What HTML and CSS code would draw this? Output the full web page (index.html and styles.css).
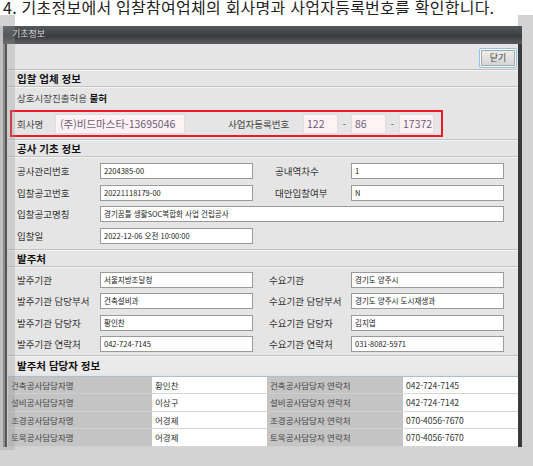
FILE: index.html
```html
<!DOCTYPE html>
<html lang="ko">
<head>
<meta charset="utf-8">
<link rel="stylesheet" href="styles.css">
</head>
<body>
<div class="caption">4. 기초정보에서 입찰참여업체의 회사명과 사업자등록번호를 확인합니다.</div>
<div class="topstrip"><div class="paper"></div></div>
<div class="window">
  <div class="titlebar">기초정보</div>
  <div class="frame">
    <div class="content">
      <div class="toolbar"><div class="btn">닫기</div></div>
      <div class="sep"></div>
      <div class="shead">입찰 업체 정보</div>
      <div class="sep"></div>
      <div class="permit">상호시장진출허용 <b>불허</b></div>
      <div class="redbox">
        <span class="rlabel">회사명</span>
        <span class="rinp wname">(주)비드마스타-13695046</span>
        <span class="rlabel2">사업자등록번호</span>
        <span class="rinp wnum">122</span>
        <span class="dash">-</span>
        <span class="rinp wnum">86</span>
        <span class="dash">-</span>
        <span class="rinp wnum">17372</span>
      </div>
      <div class="sep"></div>
      <div class="shead">공사 기초 정보</div>
      <div class="sep"></div>
      <div class="fields basic">
        <div class="frow">
          <span class="lbl">공사관리번호</span><span class="inp">2204385-00</span>
          <span class="lbl2">공내역차수</span><span class="inp">1</span>
        </div>
        <div class="frow">
          <span class="lbl">입찰공고번호</span><span class="inp">20221118179-00</span>
          <span class="lbl2">대안입찰여부</span><span class="inp">N</span>
        </div>
        <div class="frow">
          <span class="lbl">입찰공고명칭</span><span class="inp wide">경기꿈틀 생활SOC복합화 사업 건립공사</span>
        </div>
        <div class="frow">
          <span class="lbl">입찰일</span><span class="inp">2022-12-06 오전 10:00:00</span>
        </div>
      </div>
      <div class="sep"></div>
      <div class="shead">발주처</div>
      <div class="sep"></div>
      <div class="fields order">
        <div class="frow">
          <span class="lbl">발주기관</span><span class="inp">서울지방조달청</span>
          <span class="lbl3">수요기관</span><span class="inp">경기도 양주시</span>
        </div>
        <div class="frow">
          <span class="lbl">발주기관 담당부서</span><span class="inp">건축설비과</span>
          <span class="lbl3">수요기관 담당부서</span><span class="inp">경기도 양주시 도시재생과</span>
        </div>
        <div class="frow">
          <span class="lbl">발주기관 담당자</span><span class="inp">황인찬</span>
          <span class="lbl3">수요기관 담당자</span><span class="inp">김지엽</span>
        </div>
        <div class="frow">
          <span class="lbl">발주기관 연락처</span><span class="inp">042-724-7145</span>
          <span class="lbl3">수요기관 연락처</span><span class="inp">031-8082-5971</span>
        </div>
      </div>
      <div class="sep"></div>
      <div class="shead last">발주처 담당자 정보</div>
      <div class="table">
        <div class="trow"><span class="tl c1">건축공사담당자명</span><span class="tv c2">황인찬</span><span class="tl c3">건축공사담당자 연락처</span><span class="tv c4">042-724-7145</span></div>
        <div class="trow"><span class="tl c1">설비공사담당자명</span><span class="tv c2">이상구</span><span class="tl c3">설비공사담당자 연락처</span><span class="tv c4">042-724-7142</span></div>
        <div class="trow"><span class="tl c1">조경공사담당자명</span><span class="tv c2">어경제</span><span class="tl c3">조경공사담당자 연락처</span><span class="tv c4">070-4056-7670</span></div>
        <div class="trow"><span class="tl c1">토목공사담당자명</span><span class="tv c2">어경제</span><span class="tl c3">토목공사담당자 연락처</span><span class="tv c4">070-4056-7670</span></div>
      </div>
    </div>
  </div>
</div>
<div class="dim"></div>
</body>
</html>
```
FILE: styles.css
```css
* { box-sizing: border-box; }
html, body { margin: 0; padding: 0; }
body {
  width: 533px;
  height: 466px;
  overflow: hidden;
  background: #d3d3d3;
  font-family: "Noto Sans CJK KR", "Noto Sans", sans-serif;
  color: #333;
  position: relative;
}
.caption {
  height: 15px;
  background: #fff;
  font-size: 16px;
  line-height: 15px;
  padding-left: 3px;
  color: #222;
  white-space: nowrap;
  letter-spacing: 0.25px;
}
.topstrip {
  height: 11px;
  display: flex;
}
.paper {
  margin-left: 15px;
  width: 503px;
  background: #fff;
}
.window {
  margin-left: 3px;
  width: 519px;
  background: #8a8a8a;
}
.titlebar {
  height: 18px;
  background: linear-gradient(#55585d 0%, #3a3c40 55%, #5a5c5f 100%);
  color: #d6d6d6;
  font-size: 9px;
  line-height: 15px;
  padding-left: 9px;
}
.frame {
  margin-left: 2px;
  border-left: 2px solid #3a3a3a;
  border-right: 4px solid #3a3a3a;
  background: #e5e5e5;
}
.content {
  display: flex;
  flex-direction: column;
  font-size: 9.5px;
}
.toolbar {
  height: 25px;
  display: flex;
  justify-content: flex-end;
  align-items: flex-start;
  padding-top: 4px;
  padding-right: 1px;
}
.btn {
  width: 38px;
  height: 20px;
  border: 1px solid #8cc4ec;
  border-radius: 2px;
  background: linear-gradient(#efefef, #d2d2d2);
  box-shadow: inset 0 0 0 1px #fafafa, inset 0 0 0 2px #a8a8a8;
  font-size: 9px;
  line-height: 18px;
  text-align: center;
  color: #444;
}
.sep {
  height: 2px;
  background: #c2c2c2;
  border-bottom: 1px solid #f4f4f4;
}
.shead {
  height: 15px;
  font-size: 10.5px;
  font-weight: bold;
  line-height: 15px;
  padding-left: 10px;
  color: #111;
}
.shead.last {
  height: 17px;
  line-height: 17px;
  background: #e9e9e9;
}
.permit {
  height: 21px;
  line-height: 21px;
  padding-left: 10px;
  color: #444;
}
.permit b { color: #111; }
.redbox {
  margin: 1px 0 2px 3px;
  width: 433px;
  height: 27px;
  border: 2px solid #ea1b24;
  display: flex;
  align-items: center;
  color: #444;
}
.rlabel { margin-left: 5px; width: 38px; }
.rlabel2 { margin-left: 43px; width: 75px; }
.rinp {
  height: 20px;
  background: #fff2f5;
  border: 1px solid #e4dcdc;
  font-size: 10.5px;
  line-height: 18px;
  color: #6d607c;
  padding-left: 3px;
}
.wname { width: 130px; padding-left: 4px; }
.wnum { width: 35px; }
.dash { width: 13px; text-align: center; color: #555; }
.fields {
  display: flex;
  flex-direction: column;
}
.basic { padding: 5px 0 5px 0; gap: 5.7px; }
.order { padding: 4px 0 3px 0; gap: 5.3px; }
.frow {
  display: flex;
  align-items: center;
  height: 16px;
}
.lbl { width: 93px; padding-left: 10px; white-space: nowrap; }
.lbl2 { margin-left: 22px; width: 76px; white-space: nowrap; }
.lbl3 { margin-left: 16px; width: 82px; white-space: nowrap; }
.inp {
  width: 153px;
  height: 16px;
  background: #fff;
  border: 1px solid #9a9a9a;
  font-size: 7.5px;
  line-height: 14px;
  padding-left: 3px;
  color: #222;
  white-space: nowrap;
  overflow: hidden;
}
.inp.wide { width: 404px; }
.table {
  margin-left: 1px;
  border-top: 1px solid #a9bfd6;
  margin-top: 2px;
  font-size: 8.5px;
}
.trow {
  display: flex;
  height: 17.5px;
}
.tl, .tv {
  line-height: 16.5px;
  border-bottom: 1px solid #d6d6d6;
  white-space: nowrap;
}
.tl { background: #c4c4c4; color: #444; border-bottom-color: #cfcfcf; }
.tv { background: #fff; color: #333; padding-left: 3px; }
.c1 { width: 144px; padding-left: 3px; }
.c2 { width: 115px; }
.c3 { width: 136px; padding-left: 3px; }
.c4 { width: 115px; }
.dim {
  position: absolute;
  left: 0;
  top: 26px;
  width: 15px;
  height: 424px;
  background: rgba(150, 150, 150, 0.3);
}
```
